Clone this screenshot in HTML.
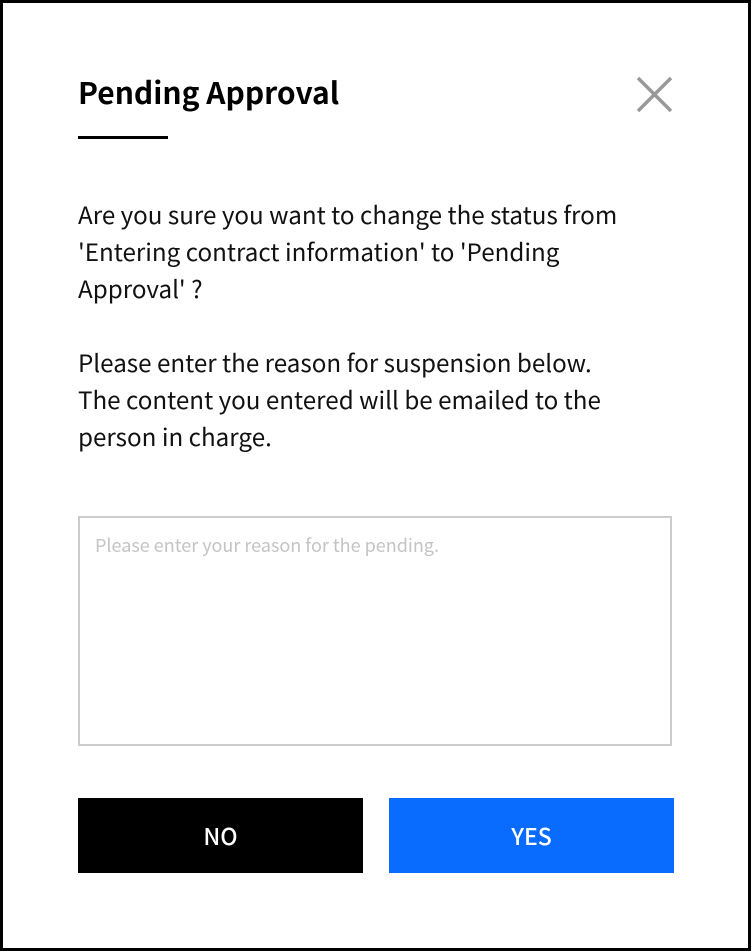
<!DOCTYPE html>
<html><head><style>
*{margin:0;padding:0;box-sizing:border-box}
body{width:751px;height:951px;background:#fff;font-family:"Noto Sans CJK KR","Liberation Sans",sans-serif;color:#111;overflow:hidden}
.frame{position:absolute;left:0;top:0;width:751px;height:951px;border:3px solid #000}
.t{position:absolute;left:78px;top:69px;font-size:30px;font-weight:700;line-height:44px;color:#000}
.u{position:absolute;left:78px;top:136px;width:90px;height:3px;background:#000}
.p{position:absolute;left:78px;font-size:24.2px;line-height:37px;color:#111;white-space:nowrap}
.ta{position:absolute;left:78px;top:516px;width:594px;height:230px;border:2px solid #ccc;padding:14px 15px;font-size:18px;color:#c4c4c4}
.b{position:absolute;top:798px;height:75px;color:#fff;font-size:23px;font-weight:500;text-align:center;line-height:75px}
</style></head><body>
<div class="frame"></div>
<div class="t">Pending Approval</div>
<svg style="position:absolute;left:630px;top:70px" width="48" height="48"><path d="M8 8L41 41M41 8L8 41" stroke="#999" stroke-width="3.5"/></svg>
<div class="u"></div>
<div class="p" style="top:195px">Are you sure you want to change the status from<br>'Entering contract information' to 'Pending<br>Approval' ?</div>
<div class="p" style="top:343px">Please enter the reason for suspension below.<br>The content you entered will be emailed to the<br>person in charge.</div>
<div class="ta">Please enter your reason for the pending.</div>
<div class="b" style="left:78px;width:285px;background:#000">NO</div>
<div class="b" style="left:389px;width:285px;background:#0a6cff">YES</div>
</body></html>
